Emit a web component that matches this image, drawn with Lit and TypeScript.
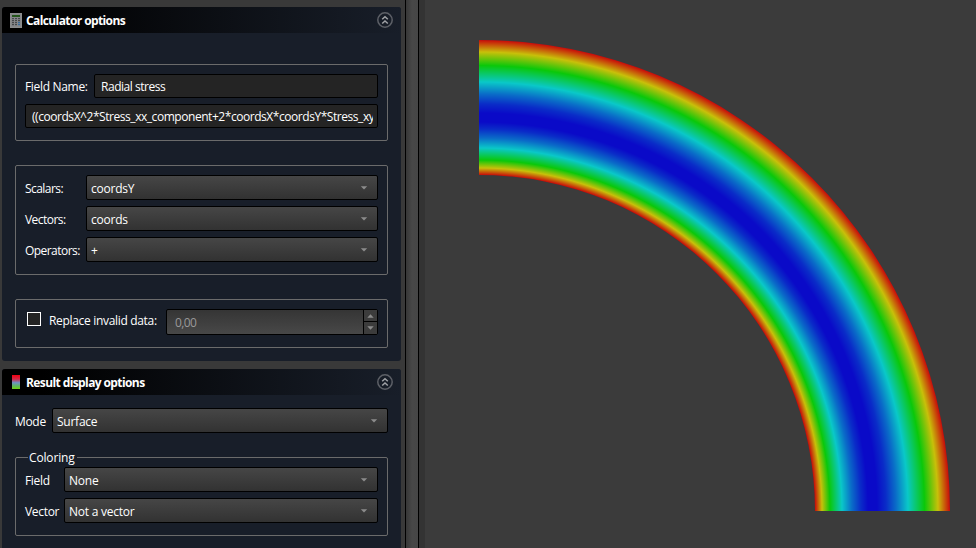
import { LitElement, html, css, svg } from "lit";
import { customElement, property } from "lit/decorators.js";

@customElement("combo-box")
class ComboBox extends LitElement {
  @property() value = "";
  static styles = css`
    :host {
      display: flex; align-items: center; justify-content: space-between;
      flex: 1; height: 25px; box-sizing: border-box; padding: 2px 9px 0 4px;
      border: 1px solid #000; border-radius: 2px; letter-spacing: -0.24px;
      background: linear-gradient(#464646, #323232);
    }
    span { padding-top: 1px; }
    svg { display: block; margin-top: -2px; }
  `;
  render() {
    return html`<span>${this.value}</span>
      <svg width="8" height="4" viewBox="0 0 8 4"><path d="M0.8 0.3h6.4L4 3.6z" fill="#8c8c8c" /></svg>`;
  }
}

@customElement("task-header")
class TaskHeader extends LitElement {
  @property() label = "";
  static styles = css`
    :host {
      display: flex; align-items: center; height: 26px; box-sizing: border-box;
      padding: 0 8px; background: linear-gradient(90deg, #000 10%, #181e29);
      border-radius: 3px 3px 0 0; font-weight: 700; letter-spacing: -0.6px;
    }
    .title { flex: 1; margin-left: 4px; padding-top: 1px; }
    .toggle { display: block; }
  `;
  render() {
    return html`<slot></slot><span class="title">${this.label}</span>
      <svg class="toggle" width="16" height="16" viewBox="0 0 16 16" fill="none">
        <circle cx="8" cy="8" r="7.2" stroke="#5d6067" stroke-width="1.5" />
        <path d="M5.2 7.3 8 4.7l2.8 2.6M5.2 11.5 8 8.9l2.8 2.6" stroke="#a0a2a6" stroke-width="1.5" />
      </svg>`;
  }
}

const STOPS: [number, string][] = [
  [336, "#c80a0a"], [343, "#c8c00a"], [351, "#0ac80a"], [363, "#0ac8c8"],
  [373, "#0a6cc8"], [382, "#0a2cc8"], [389, "#0a0ac8"], [398, "#0a0ac8"],
  [407, "#0a2cc8"], [417, "#0a6cc8"],
  [429, "#0ac8c8"], [445.5, "#0ac80a"], [459, "#c8c00a"], [471, "#c80a0a"],
];

@customElement("app-root")
class AppRoot extends LitElement {
  static styles = css`
    :host {
      display: flex; width: 976px; height: 548px; overflow: hidden;
      background: #3b3b3b; color: #fff;
      font: 12px/16px "Open Sans", "Noto Sans", sans-serif;
      letter-spacing: -0.32px; white-space: nowrap;
    }
    .side { width: 405px; box-sizing: border-box; padding: 7px 4px 0 2px; background: #393939; }
    .panel { background: #181e29; border-radius: 3px; box-sizing: border-box; }
    .calc { height: 354px; }
    .result { height: 179px; margin-top: 8px; border-radius: 3px 3px 0 0; }
    .content { padding: 0 13px; }
    .group {
      box-sizing: border-box; border: 1px solid #6b6b6b; border-radius: 2px;
      padding: 9px 9px 0; display: flex; flex-direction: column; gap: 6px;
    }
    .name { height: 77px; margin-top: 31px; }
    .lists { height: 110px; margin-top: 24px; }
    .replace { height: 49px; margin-top: 24px; }
    .row { display: flex; align-items: center; }
    .input {
      flex: 1; min-width: 0; height: 24px; box-sizing: border-box; overflow: hidden;
      border: 1px solid #000; border-radius: 2px; background: #242424; padding: 4px 4px 0 6px;
      letter-spacing: -0.47px;
    }
    .formula { flex: none; letter-spacing: -0.45px; }
    .clip { overflow: hidden; height: 17px; }
    .w61 { width: 61px; }
    .w69 { width: 69px; }
    .w39 { width: 39px; }
    .w37 { width: 37px; }
    .label { padding-top: 2px; }
    .w61 { letter-spacing: -0.55px; }
    .w69 { padding-top: 1px; }
    .check { width: 14px; height: 14px; box-sizing: border-box; border: 1px solid #fff; background: #242424; margin: 0 8px 7px 2px; }
    .invalid { width: 117px; margin-top: -2px; }
    .spin {
      flex: 1; display: flex; height: 26px; box-sizing: border-box; border: 1px solid #000;
      border-radius: 2px; background: linear-gradient(#353535, #484848); color: #999;
    }
    .number { flex: 1; padding: 5px 0 0 8px; letter-spacing: -0.6px; }
    .steps { width: 13px; border-left: 1px solid #000; display: flex; flex-direction: column; }
    .step { height: 11px; display: grid; place-items: center; background: #3c3c3c; }
    .down { height: 12px; border-top: 1px solid #000; }
    .mode { margin-top: 13px; }
    .coloring { height: 79px; margin-top: 24px; }
    .legend { height: 0; overflow: visible; margin: -9px 0 3px; padding-left: 3px; letter-spacing: -0.15px; }
    .legend span { display: inline-block; width: 49px; box-sizing: border-box; padding-left: 1px; background: #181e29; position: relative; top: -8px; }
    .splitter { width: 14px; box-sizing: border-box; border: solid #000; border-width: 0 1px; background: linear-gradient(90deg, #373737, #474747 50%, #464646); }
    .gutter { width: 6px; background: #333; }
    .view { flex: 1; background: #3b3b3b; }
    svg { display: block; }
  `;

  combo(label: string, width: string, value: string) {
    return html`<div class="row"><span class="label ${width}">${label}</span><combo-box .value=${value}></combo-box></div>`;
  }

  render() {
    return html`
      <div class="side">
        <div class="panel calc">
          <task-header label="Calculator options">
            <svg width="12" height="15" viewBox="0 0 12 15">
              <rect x=".5" y=".5" width="11" height="14" fill="#85878a" stroke="#8b8d8d" />
              <rect x="2" y="2" width="8" height="2" fill="#24551a" />
              ${[5, 7, 9, 11].map((y) => [2, 5, 8].map((x) => svg`<rect x=${x} y=${y} width="2" height="1.2" fill=${x === 8 && y > 8 ? "#356b9c" : "#45484a"} />`))}
            </svg>
          </task-header>
          <div class="content">
            <div class="group name">
              <div class="row"><span class="label w69">Field Name:</span><div class="input">Radial stress</div></div>
              <div class="input formula"><div class="clip">((coordsX^2*Stress_xx_component+2*coordsX*coordsY*Stress_xy</div></div>
            </div>
            <div class="group lists">
              ${this.combo("Scalars:", "w61", "coordsY")}
              ${this.combo("Vectors:", "w61", "coords")}
              ${this.combo("Operators:", "w61", "+")}
            </div>
            <div class="group replace">
              <div class="row">
                <div class="check"></div><span class="invalid">Replace invalid data:</span>
                <div class="spin">
                  <div class="number">0,00</div>
                  <div class="steps">
                    <div class="step"><svg width="7" height="4"><path d="M0.3 3.8h6.4L3.5 0.3z" fill="#8c8c8c" /></svg></div>
                    <div class="step down"><svg width="7" height="4"><path d="M0.3 0.2h6.4L3.5 3.7z" fill="#8c8c8c" /></svg></div>
                  </div>
                </div>
              </div>
            </div>
          </div>
        </div>
        <div class="panel result">
          <task-header label="Result display options">
            <svg width="12" height="14" viewBox="0 0 12 14">
              <defs><linearGradient id="bar" x2="0" y2="1"><stop stop-color="#f00010" /><stop offset=".3" stop-color="#d02848" /><stop offset=".55" stop-color="#6d94c4" /><stop offset=".8" stop-color="#5fb858" /><stop offset="1" stop-color="#70d010" /></linearGradient></defs>
              <rect x="2" width="8" height="14" fill="url(#bar)" />
            </svg>
          </task-header>
          <div class="content">
            <div class="mode">${this.combo("Mode", "w37", "Surface")}</div>
            <div class="group coloring">
              <div class="legend"><span>Coloring</span></div>
              ${this.combo("Field", "w39", "None")}
              ${this.combo("Vector", "w39", "Not a vector")}
            </div>
          </div>
        </div>
      </div>
      <div class="splitter"></div>
      <div class="gutter"></div>
      <div class="view">
        <svg width="551" height="548" viewBox="425 0 551 548">
          <defs>
            <radialGradient id="stress" gradientUnits="userSpaceOnUse" cx="479" cy="511" r="471">
              ${STOPS.map(([r, c]) => svg`<stop offset=${r / 471} stop-color=${c} />`)}
            </radialGradient>
          </defs>
          <path d="M479 40A471 471 0 0 1 950 511H815A336 336 0 0 0 479 175Z" fill="url(#stress)" />
        </svg>
      </div>`;
  }
}
